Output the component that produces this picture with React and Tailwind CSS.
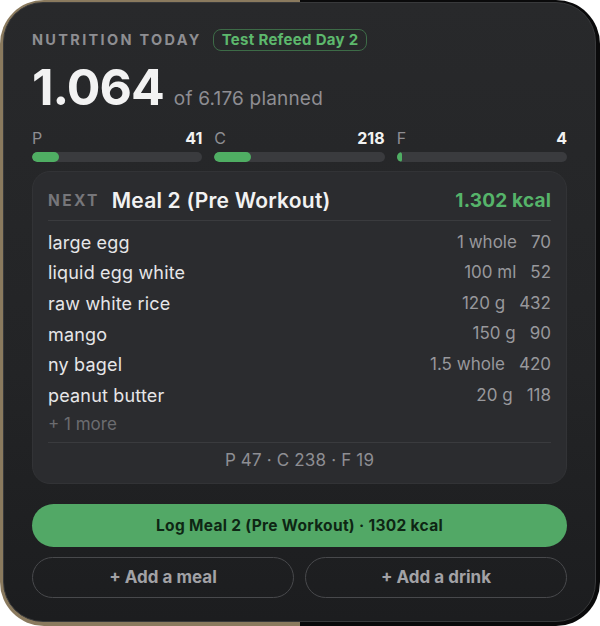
import React from "react";

const items = [
  ["large egg", "1 whole", "70"],
  ["liquid egg white", "100 ml", "52"],
  ["raw white rice", "120 g", "432"],
  ["mango", "150 g", "90"],
  ["ny bagel", "1.5 whole", "420"],
  ["peanut butter", "20 g", "118"],
];

function Macro({ label, value, fill }) {
  return (
    <div className="flex flex-col">
      <div className="flex items-end justify-between h-[20px]">
        <span className="text-[16px] leading-none text-[#8e8e93]">{label}</span>
        <span className="text-[16px] leading-none font-bold text-[#f2f2f2]">{value}</span>
      </div>
      <div className="mt-[6px] h-[10px] rounded-full bg-[#3a3b3e] overflow-hidden">
        <div className="h-full rounded-full bg-[#4fae63]" style={{ width: fill }} />
      </div>
    </div>
  );
}

export default function App() {
  return (
    <div className="w-[600px] h-[626px] bg-white" style={{ fontFamily: "Inter, 'Noto Sans', sans-serif" }}>
      <div className="h-[626px] rounded-[44px] bg-[linear-gradient(90deg,#8a7a5e_0%,#8a7a5e_50%,#0a0a0b_50%,#0a0a0b_100%)] pt-[2px] pr-[4px] pb-[4px] pl-[3px]">
        <div className="h-full rounded-[40px] bg-[linear-gradient(180deg,#28292b_0%,#232426_60%,#1c1d1f_100%)] border border-[#38393b] pl-[28px] pr-[28px] pt-[24px] flex flex-col">
          <div className="flex items-center gap-[11px] h-[26px]">
            <span className="text-[14.5px] font-bold tracking-[0.16em] text-[#8e8e92]">NUTRITION TODAY</span>
            <span className="h-[22px] px-[8px] flex items-center rounded-[8px] border border-[#3d6b47] text-[15px] font-bold tracking-[0.02em] text-[#5db86d]">Test Refeed Day 2</span>
          </div>
          <div className="flex items-baseline gap-[10px] mt-[9px] h-[54px]">
            <span className="text-[50px] font-bold leading-none tracking-[-0.02em] text-[#f2f2f2]">1.064</span>
            <span className="text-[19px] tracking-[0.01em] text-[#8e8e93]">of 6.176 planned</span>
          </div>
          <div className="grid grid-cols-3 gap-[12px] mt-[10px]">
            <Macro label="P" value="41" fill="27px" />
            <Macro label="C" value="218" fill="37px" />
            <Macro label="F" value="4" fill="5px" />
          </div>
          <div className="mt-[9px] rounded-[18px] bg-[#2b2c2f] border border-[#323336] px-[15px] pt-[14px] pb-[14px] flex flex-col h-[313px]">
            <div className="flex items-center justify-between pb-[4px] border-b border-[#3a3b3e] h-[35px]">
              <div className="flex items-center gap-[12px]">
                <span className="text-[15.5px] font-bold tracking-[0.15em] text-[#76767a]">NEXT</span>
                <span className="text-[21px] font-semibold tracking-[0.01em] text-[#f2f2f2]">Meal 2 (Pre Workout)</span>
              </div>
              <span className="text-[19px] font-bold tracking-[0.01em] text-[#56b46a]">1.302 kcal</span>
            </div>
            <div className="flex flex-col mt-[6px]">
              {items.map(([n, q, k]) => (
                <div key={n} className="flex items-center justify-between h-[30.6px]">
                  <span className="text-[18px] tracking-[0.01em] text-[#e6e6e8]">{n}</span>
                  <span className="flex gap-[14px] text-[17px] text-[#98989c]">
                    <span>{q}</span>
                    <span>{k}</span>
                  </span>
                </div>
              ))}
              <div className="h-[28px] flex items-center text-[17px] text-[#6c6c70]">+ 1 more</div>
            </div>
            <div className="border-t border-[#3a3b3e] mt-[3px] pt-[5px] text-center text-[17px] tracking-[0.01em] text-[#8e8e93]">P 47 · C 238 · F 19</div>
          </div>
          <div className="mt-[20px] h-[43px] rounded-full bg-[#52a866] flex items-center justify-center text-[15.5px] font-bold tracking-[0.02em] text-[#0e2614]">
            Log Meal 2 (Pre Workout) · 1302 kcal
          </div>
          <div className="grid grid-cols-2 gap-[11px] mt-[10px]">
            <div className="h-[41px] rounded-full border-[1.5px] border-[#48494c] flex items-center justify-center text-[17px] font-bold text-[#a2a2a6]">+ Add a meal</div>
            <div className="h-[41px] rounded-full border-[1.5px] border-[#48494c] flex items-center justify-center text-[17px] font-bold text-[#a2a2a6]">+ Add a drink</div>
          </div>
        </div>
      </div>
    </div>
  );
}
